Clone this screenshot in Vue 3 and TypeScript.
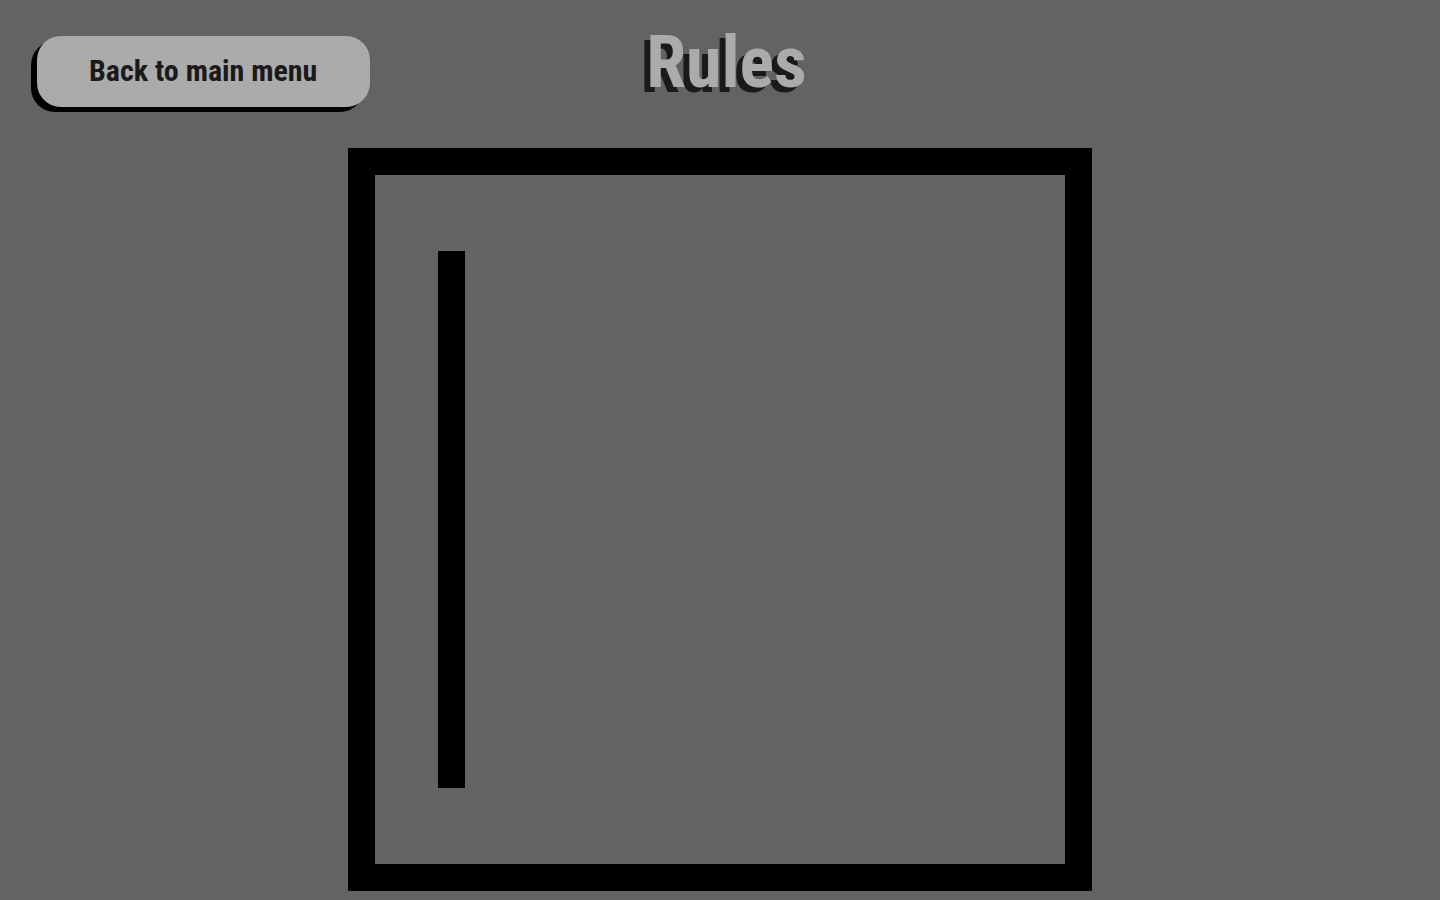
<script setup lang="ts">
const title: string = 'Rules'
const backLabel: string = 'Back to main menu'
</script>

<template>
  <div class="page">
    <header class="top">
      <button class="back" type="button">{{ backLabel }}</button>
      <h1 class="title">{{ title }}</h1>
    </header>
    <main class="stage">
      <section class="board" aria-label="Rules board">
        <div class="bar"></div>
      </section>
    </main>
  </div>
</template>

<style>
body {
  background: #636363;
}
</style>

<style scoped>
.page {
  box-sizing: border-box;
  min-height: 100vh;
  background: #636363;
  font-family: "Roboto Condensed", "Liberation Sans Narrow", "Liberation Sans", sans-serif;
}
.top {
  display: grid;
  grid-template-columns: 1fr auto 1fr;
  align-items: start;
  padding: 20px 24px 0 37px;
  height: 128px;
}
.back {
  justify-self: start;
  margin-top: 16px;
  padding: 0 53px 2px 52px;
  height: 71px;
  border: 0;
  border-radius: 24px;
  background: #ababab;
  box-shadow: -6px 5px 0 #000;
  color: #1a1a1a;
  font-family: inherit;
  font-size: 30px;
  font-weight: 700;
  white-space: nowrap;
  cursor: pointer;
}
.title {
  margin: 0;
  color: #ababab;
  font-size: 72px;
  font-weight: 700;
  line-height: 86px;
  text-shadow: -6px 5px 0 #1a1a1a;
}
.stage {
  display: flex;
  justify-content: center;
  padding-bottom: 9px;
}
.board {
  box-sizing: border-box;
  display: flex;
  height: calc(100vh - 157px);
  aspect-ratio: 744 / 743;
  padding: 76px 63px;
  border: 27px solid #000;
}
.bar {
  width: 27px;
  background: #000;
}
</style>
